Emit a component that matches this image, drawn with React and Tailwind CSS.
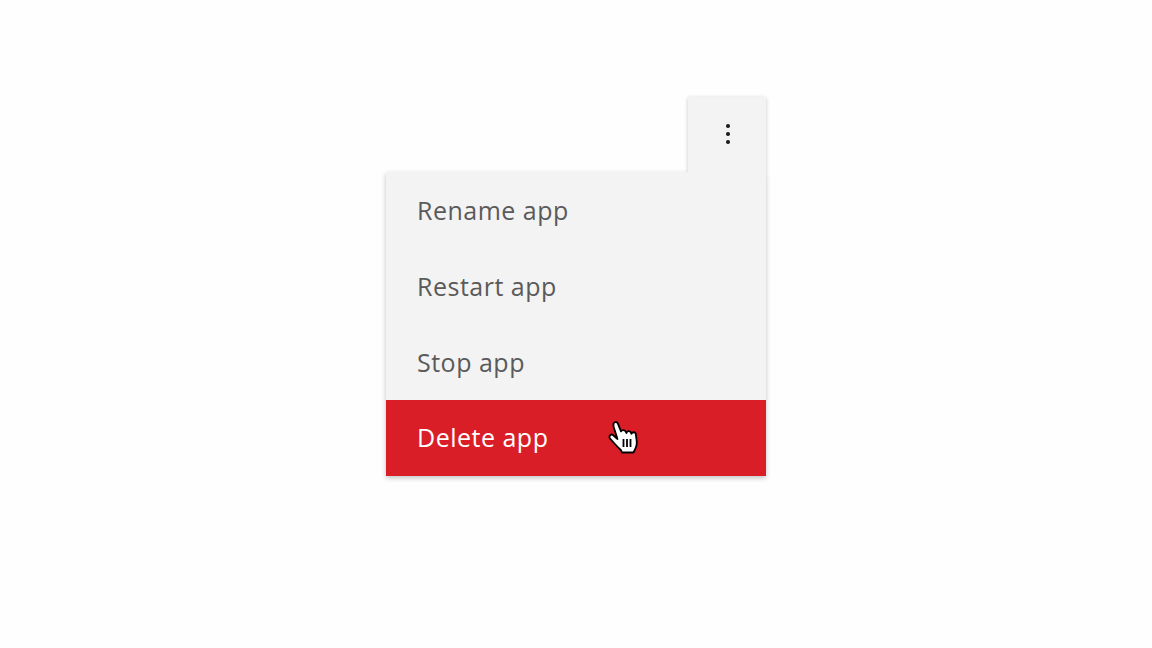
import React from 'react';

const items = ['Rename app', 'Restart app', 'Stop app'];

const HandCursor = () => (
  <svg width="30" height="36" viewBox="0 0 30 36" className="absolute left-[222px] top-[19px]">
    <path
      d="M5.500 4.500C6 2.800 8.800 2.400 9.700 4.200L13 12.300C13.800 10.800 16.500 10.600 17.500 12.300L18.500 14C19 11.800 21.800 11.500 22.800 13.300L23.500 14.800C24.300 12.700 27.300 12.800 27.800 14.800L28.800 23C29 26.500 27.500 30 25.500 33.500H14L12.800 31C9 27.500 5.500 23.500 2 19.500C0.500 17.500 2.800 14.500 5 16L9.500 20L5.500 7.500Z"
      fill="#fff"
      stroke="#000"
      strokeWidth="1.800"
      strokeLinejoin="round"
    />
    <path d="M15.500 20v8M19 20v8M22.500 20v8" stroke="#000" strokeWidth="1.800" fill="none" />
  </svg>
);

export default function App() {
  return (
    <div className="w-full h-[648px] bg-[#fefefe] flex justify-center pt-[97px] font-['Open_Sans',sans-serif] overflow-hidden">
      <div className="w-[380px] h-[379px] flex flex-col items-end">
        <div className="relative w-[78px] h-[75px] bg-[#f3f3f3] flex items-center justify-center shadow-[0_1px_4px_rgba(0,0,0,0.22)]">
          <div className="flex flex-col gap-[4px] ml-[1px] -mt-[1px]">
            <span className="w-[4px] h-[4px] rounded-full bg-[#161616]" />
            <span className="w-[4px] h-[4px] rounded-full bg-[#161616]" />
            <span className="w-[4px] h-[4px] rounded-full bg-[#161616]" />
          </div>
        </div>
        <div className="relative w-full bg-[#f3f3f3] shadow-[0_2px_5px_rgba(0,0,0,0.24)]">
          {items.map((item) => (
            <div key={item} className="h-[76px] flex items-center pl-[31px] pt-[1px] text-[25px] tracking-[0.5px] text-[#5a5a5a]">
              {item}
            </div>
          ))}
          <div className="relative h-[76px] flex items-center pl-[31px] text-[25px] tracking-[0.5px] text-white bg-[#da1e28]">
            Delete app
            <HandCursor />
          </div>
          <div className="absolute right-0 top-[-6px] w-[78px] h-[8px] bg-[#f3f3f3]" />
        </div>
      </div>
    </div>
  );
}
